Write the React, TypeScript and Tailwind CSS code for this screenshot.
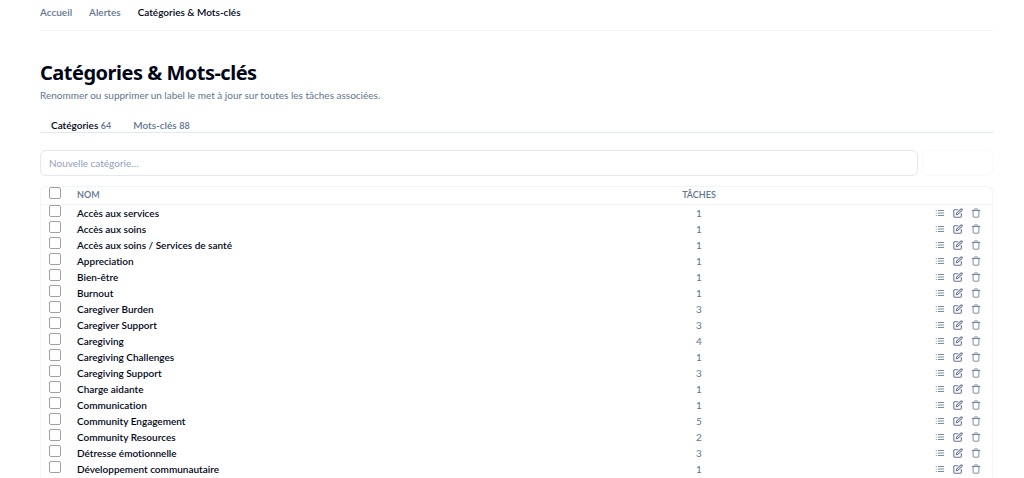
import { FiEdit, FiList, FiTrash } from "react-icons/fi";

const NAV_LINKS = [
  { label: "Accueil", active: false },
  { label: "Alertes", active: false },
  { label: "Catégories & Mots-clés", active: true },
];

const TABS = [
  { label: "Catégories", count: 64, active: true },
  { label: "Mots-clés", count: 88, active: false },
];

const CATEGORIES = [
  { name: "Accès aux services", tasks: 1 },
  { name: "Accès aux soins", tasks: 1 },
  { name: "Accès aux soins / Services de santé", tasks: 1 },
  { name: "Appreciation", tasks: 1 },
  { name: "Bien-être", tasks: 1 },
  { name: "Burnout", tasks: 1 },
  { name: "Caregiver Burden", tasks: 3 },
  { name: "Caregiver Support", tasks: 3 },
  { name: "Caregiving", tasks: 4 },
  { name: "Caregiving Challenges", tasks: 1 },
  { name: "Caregiving Support", tasks: 3 },
  { name: "Charge aidante", tasks: 1 },
  { name: "Communication", tasks: 1 },
  { name: "Community Engagement", tasks: 5 },
  { name: "Community Resources", tasks: 2 },
  { name: "Détresse émotionnelle", tasks: 3 },
  { name: "Développement communautaire", tasks: 1 },
];

function Checkbox({ label }: { label: string }) {
  return (
    <input
      type="checkbox"
      aria-label={label}
      className="block size-3 appearance-none rounded-xs border border-[#a0a0a0] bg-white checked:bg-slate-700"
    />
  );
}

function RowActions({ name }: { name: string }) {
  return (
    <div className="flex items-center justify-end gap-2 pr-[11px] text-slate-500">
      <button type="button" aria-label={`Voir les tâches de ${name}`}>
        <FiList className="size-[10px]" strokeWidth={2} />
      </button>
      <button type="button" aria-label={`Renommer ${name}`}>
        <FiEdit className="size-[10px]" strokeWidth={2.5} />
      </button>
      <button type="button" aria-label={`Supprimer ${name}`}>
        <FiTrash className="size-[10px]" strokeWidth={2} />
      </button>
    </div>
  );
}

export default function App() {
  return (
    <div className="flex min-h-screen flex-col bg-white pr-[31px] pl-10 font-['Lato','Open_Sans',sans-serif] text-[10px] text-slate-950 [font-variant-ligatures:none]">
      <nav className="flex gap-[17px] border-b border-slate-100 pt-1 pb-[10px]">
        {NAV_LINKS.map((link) => (
          <a
            key={link.label}
            href="#"
            className={
              link.active
                ? "leading-4 font-semibold"
                : "leading-4 font-semibold text-slate-500"
            }
          >
            {link.label}
          </a>
        ))}
      </nav>

      <header className="pt-7">
        <h1 className="font-['Noto_Sans','Open_Sans',sans-serif] text-[20px] leading-7 font-bold tracking-tight">
          Catégories & Mots-clés
        </h1>
        <p className="leading-4 text-slate-500">
          Renommer ou supprimer un label le met à jour sur toutes les tâches
          associées.
        </p>
      </header>

      <div role="tablist" className="mt-4 flex border-b border-slate-200">
        {TABS.map((tab) => (
          <button
            key={tab.label}
            type="button"
            role="tab"
            aria-selected={tab.active}
            className={
              tab.active
                ? "px-[11px] leading-3 font-semibold"
                : "px-[11px] leading-3 font-semibold text-slate-500"
            }
          >
            {tab.label}{" "}
            <span className="text-[9px] text-slate-500">{tab.count}</span>
          </button>
        ))}
      </div>

      <form className="mt-[17px] flex gap-1">
        <input
          type="text"
          aria-label="Nouvelle catégorie"
          placeholder="Nouvelle catégorie…"
          className="h-[26px] min-w-0 flex-1 rounded-md border border-slate-200 px-2 placeholder:text-slate-400"
        />
        <button
          type="button"
          disabled
          aria-label="Ajouter"
          className="h-[26px] w-[71px] rounded-md border border-slate-50 bg-white"
        />
      </form>

      <div className="mt-[10px] flex-1 rounded-t-md border border-b-0 border-slate-100">
        <table className="w-full table-fixed">
          <colgroup>
            <col className="w-9" />
            <col />
            <col className="w-[120px]" />
            <col className="w-[233px]" />
          </colgroup>
          <thead>
            <tr className="h-[17px] border-b border-slate-100 text-[9px] leading-4 text-slate-500">
              <th className="pl-2 align-top">
                <Checkbox label="Tout sélectionner" />
              </th>
              <th className="text-left font-semibold">NOM</th>
              <th className="font-semibold">TÂCHES</th>
              <th />
            </tr>
          </thead>
          <tbody>
            {CATEGORIES.map((category) => (
              <tr key={category.name} className="h-4 leading-4">
                <td className="pl-2 align-top">
                  <Checkbox label={`Sélectionner ${category.name}`} />
                </td>
                <td className="font-semibold">{category.name}</td>
                <td className="text-center text-slate-500">{category.tasks}</td>
                <td>
                  <RowActions name={category.name} />
                </td>
              </tr>
            ))}
          </tbody>
        </table>
      </div>
    </div>
  );
}
